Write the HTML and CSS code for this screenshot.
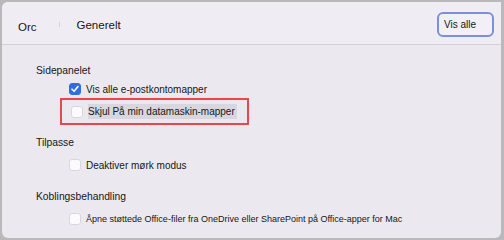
FILE: index.html
```html
<html>
    <head>
        <meta charset="utf-8">
        <link rel="stylesheet" href="styles.css">
    </head>
    <body>
        <div class="window">
            <div class="toolbar">
                <span class="tab tabFirst">Orc</span>
                <span class="tabTick"></span>
                <span class="tab tabActive">Generelt</span>
                <span class="spacer"></span>
                <button class="showAll">Vis alle</button>
            </div>
            <div class="content">
                <div class="group groupSide">
                    <div class="groupTitle">Sidepanelet</div>
                    <label class="option">
                        <span class="box checked">
                            <svg width="10" height="10" viewBox="0 0 10 10"><path d="M2 5.2 L4.1 7.3 L8 2.6" fill="none" stroke="#fff" stroke-width="1.6" stroke-linecap="round" stroke-linejoin="round"/></svg>
                        </span>
                        <span class="optionText">Vis alle e-postkontomapper</span>
                    </label>
                    <div class="highlight">
                        <label class="option">
                            <span class="box"></span>
                            <span class="optionText selected">Skjul På min datamaskin-mapper</span>
                        </label>
                    </div>
                </div>
                <div class="group groupTheme">
                    <div class="groupTitle">Tilpasse</div>
                    <label class="option">
                        <span class="box"></span>
                        <span class="optionText">Deaktiver mørk modus</span>
                    </label>
                </div>
                <div class="group">
                    <div class="groupTitle">Koblingsbehandling</div>
                    <label class="option">
                        <span class="box"></span>
                        <span class="optionText small">Åpne støttede Office-filer fra OneDrive eller SharePoint på Office-apper for Mac</span>
                    </label>
                </div>
            </div>
        </div>
    </body>
</html>
```

FILE: styles.css
```css
html, body {
  margin: 0;
  padding: 0;
  background: #b9b8bb;
}
body {
  font-family: "Liberation Sans", Arial, sans-serif;
  color: #161616;
}
.window {
  margin: 2px 3px 2px 2px;
  height: 236px;
  background: #ebe9ef;
  border-radius: 6px 0 6px 6px;
  overflow: hidden;
}
.toolbar {
  display: flex;
  align-items: center;
  height: 42px;
  background: #efedf3;
  border-bottom: 1px solid #d3d1d7;
  padding: 0 7px 0 16px;
}
.tab {
  font-size: 11.5px;
}
.tabFirst {
  padding-top: 7px;
}
.tabActive {
  padding-top: 3px;
}
.tabTick {
  width: 1px;
  height: 5px;
  background: #d6d4da;
  margin: 3px 17px 0 22px;
}
.spacer {
  flex: 1;
}
.showAll {
  font-family: inherit;
  font-size: 10px;
  color: #161616;
  background: #f2f0f6;
  border: 2px solid #7c8ede;
  border-radius: 6px;
  width: 57px;
  height: 25px;
  text-align: left;
  padding: 0 0 0 5px;
  margin-top: 2px;
}
.content {
  padding: 19px 0 0 34px;
}
.groupTitle {
  font-size: 10.3px;
  height: 14px;
  line-height: 14px;
  margin-bottom: 7px;
}
.groupSide .groupTitle {
  margin-bottom: 3px;
}
.groupSide {
  margin-bottom: 11px;
}
.groupTheme {
  margin-bottom: 17px;
}
.option {
  display: flex;
  align-items: center;
  height: 16px;
  padding-left: 33px;
}
.box {
  width: 10px;
  height: 10px;
  border: 1px solid #d9d7dd;
  border-radius: 3px;
  background: #fbfbfd;
  margin-right: 5px;
  display: flex;
  align-items: center;
  justify-content: center;
}
.box.checked {
  background: #2f6ee2;
  border-color: #2f6ee2;
}
.optionText {
  font-size: 10px;
}
.optionText.small {
  font-size: 9px;
}
.selected {
  background: #d9d7dd;
  padding: 2px 2px 2px 0;
}
.highlight {
  margin: 1px 0 0 24px;
  width: 185px;
  height: 23px;
  border: 2px solid #e8474c;
  display: flex;
  align-items: center;
}
.highlight .option {
  padding-left: 9px;
}
```
